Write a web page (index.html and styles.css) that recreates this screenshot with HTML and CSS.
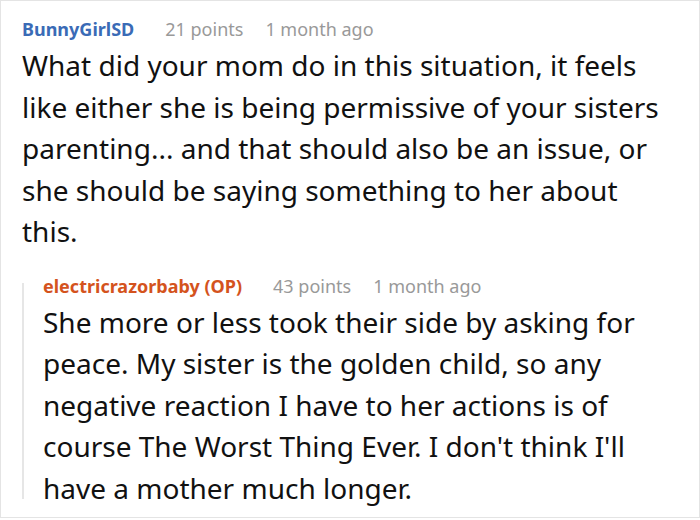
FILE: index.html
```html
<!DOCTYPE html>
<html>
<head>
<meta charset="utf-8">
<link rel="stylesheet" href="styles.css">
</head>
<body>
<div class="frame">
  <div class="comment">
    <div class="meta">
      <span class="user">BunnyGirlSD</span>
      <span class="info">21 points</span>
      <span class="info">1 month ago</span>
    </div>
    <p class="text">What did your mom do in this situation, it feels like either she is being permissive of your sisters parenting... and that should also be an issue, or she should be saying something to her about this.</p>
    <div class="reply">
      <div class="meta">
        <span class="user op">electricrazorbaby (OP)</span>
        <span class="info">43 points</span>
        <span class="info">1 month ago</span>
      </div>
      <p class="text">She more or less took their side by asking for peace. My sister is the golden child, so any negative reaction I have to her actions is of course The Worst Thing Ever. I don't think I'll have a mother much longer.</p>
    </div>
  </div>
</div>
</body>
</html>
```
FILE: styles.css
```css
html, body {
  margin: 0;
  padding: 0;
  background: #ffffff;
}
body {
  font-family: "Noto Sans", "Open Sans", sans-serif;
  color: #111111;
}
.frame {
  box-sizing: border-box;
  width: 700px;
  height: 518px;
  border: 1px solid #e4e4e4;
  overflow: hidden;
}
.comment {
  padding: 16px 20px 0 21px;
}
.meta {
  display: flex;
  gap: 22px;
  font-size: 18px;
  line-height: 24px;
  margin-bottom: 4px;
  white-space: nowrap;
}
.user {
  font-weight: 700;
  color: #3a6bb6;
  margin-right: 9px;
}
.user.op {
  color: #d4531d;
}
.info {
  color: #999999;
}
.text {
  margin: 0;
  font-size: 28px;
  line-height: 41.5px;
}
.reply {
  display: flex;
  flex-direction: column;
  margin-top: 30px;
  border-left: 2px solid #e6e6e6;
  padding-left: 19px;
}
.reply .meta {
  margin-top: -9px;
}
.reply .text {
  margin-bottom: -10px;
}
```
